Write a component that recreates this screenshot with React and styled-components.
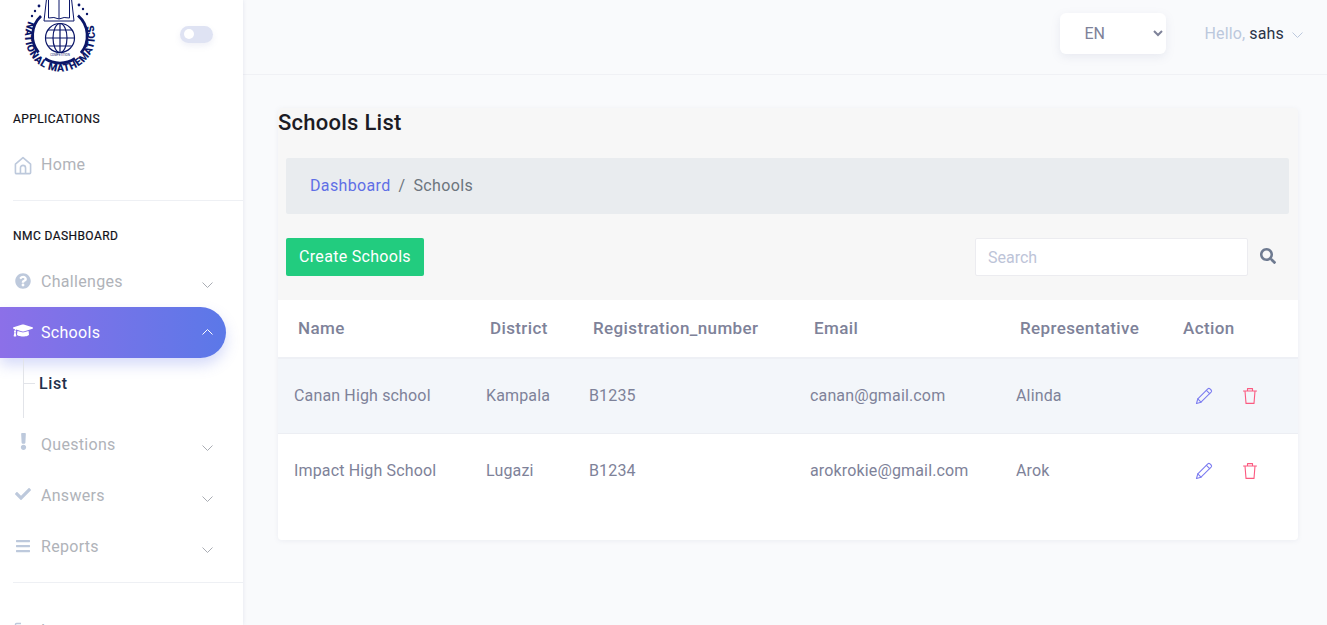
import React from "react";
import styled, { createGlobalStyle } from "styled-components";
import { FaQuestionCircle, FaGraduationCap, FaExclamation, FaCheck, FaBars, FaSearch } from "react-icons/fa";

const Global = createGlobalStyle`
  html, body { margin: 0; height: 100%; overflow: hidden; }
  body { font-family: Roboto, "Liberation Sans", sans-serif; font-size: 16px; letter-spacing: .15px; color: #7e8299; background: #f9fafc; }
  * { box-sizing: border-box; }
`;

const Page = styled.div`display: flex; height: 625px; overflow: hidden;`;
const Sidebar = styled.aside`
  flex: 0 0 243px; height: 625px; overflow: hidden; background: #fff;
  box-shadow: 0 0 4px rgba(120,130,170,.18);
  position: relative; z-index: 2;
`;
const Brand = styled.div`height: 74px; display: flex; align-items: flex-start; padding-left: 21px;`;
const LogoSvg = styled.svg`width: 78px; height: 74px; flex: none;`;
const Toggle = styled.div`
  width: 33px; height: 17px; border-radius: 9px; background: #dfe3f3; margin: 26px 0 0 81px;
  box-shadow: 0 3px 6px rgba(120,130,190,.12); padding: 3px 0 0 4px;
`;
const Knob = styled.div`width: 10px; height: 10px; border-radius: 50%; background: #fff;`;
const Heading = styled.div`
  height: 18px; line-height: 18px; margin: ${p => p.$top}px 0 12px 13px;
  font-size: 12px; font-weight: 400; letter-spacing: .42px; color: #111118; transform: translateY(1px);
  -webkit-text-stroke: .2px #111118;
`;
const Divider = styled.div`height: 1px; background: #eef0f4; margin: 10px 0 0 13px;`;
const Item = styled.div`
  height: 51px; display: flex; align-items: center; padding: 0 30px 0 13px;
  color: #b0b3b9; font-size: 16px; letter-spacing: .3px; position: relative;
`;
const ActiveItem = styled(Item)`
  width: 226px; color: #fff; border-radius: 0 26px 26px 0;
  background: linear-gradient(90deg, #8c70e8 0%, #5b78e8 100%);
  box-shadow: 0 7px 14px rgba(92,110,230,.25); padding-right: 13px;
`;
const LogoutItem = styled(Item)`margin-top: 22px;`;
const IconSlot = styled.span`
  width: 20px; height: 20px; margin-right: 8px; display: flex; align-items: center; justify-content: center;
  color: ${p => p.$light ? "#fff" : "#bdc9dc"}; flex: none; transform: translateY(${p => p.$dy || 0}px);
`;
const Label = styled.span`flex: 1;`;
const Chevron = styled.svg`
  width: 11px; height: 6px; fill: none; stroke: ${p => p.$color || "#a9acb3"}; stroke-width: 1;
  transform: translateY(${p => p.$dy ?? 3}px); flex: none; margin-left: ${p => p.$left || 0}px;
`;
const SubMenu = styled.div`height: 61px; position: relative; padding: 15px 0 0 39px;
  color: #22304a; font-weight: 500; font-size: 16px; letter-spacing: .6px; line-height: 22px;`;
const SubLineV = styled.span`position: absolute; left: 23px; top: 0; bottom: 1px; width: 1px; background: #e2e4e9;`;
const SubLineH = styled.span`position: absolute; left: 23px; top: 25px; width: 12px; height: 1px; background: #e2e4e9;`;

const Main = styled.main`flex: 1; min-width: 0; display: flex; flex-direction: column;`;
const Topbar = styled.header`
  height: 75px; flex: none; border-bottom: 1px solid #f0f1f5; display: flex; align-items: flex-start;
  padding: 13px 24px 0 0; justify-content: flex-end;
`;
const LangSelect = styled.select`
  width: 106px; height: 41px; border: 0; border-radius: 6px; background: #fff; color: #7e8299;
  font: 16px Roboto, sans-serif; padding-left: 21px; box-shadow: 0 3px 10px rgba(120,130,170,.13); outline: none;
`;
const Hello = styled.div`
  margin-left: 39px; height: 41px; display: flex; align-items: center; color: #bcc8dd; font-size: 16px;
  b { font-weight: 400; color: #2a3347; margin-left: 4px; }
`;
const Content = styled.div`padding: 33px 29px 0 35px;`;
const Card = styled.section`
  background: #f7f7f7; border-radius: 4px; box-shadow: 0 1px 5px rgba(130,140,170,.1); overflow: hidden;
`;
const Title = styled.h1`margin: 0; padding-top: 1px; height: 28px; font-size: 22px; line-height: 28px; font-weight: 500; letter-spacing: .25px; color: #1c1c24;`;
const Crumb = styled.nav`
  margin: 22px 9px 0 8px; height: 56px; background: #e9ecef; border-radius: 2px; padding: 0 0 2px 24px;
  display: flex; align-items: center; gap: 8px; color: #6c757d; letter-spacing: .35px;
  a { color: #5f6fe6; }
`;
const Tools = styled.div`display: flex; align-items: center; padding: 24px 22px 24px 8px;`;
const CreateBtn = styled.button`
  width: 138px; height: 38px; border: 0; border-radius: 2px; background: #22cc7f; color: #fff;
  font: 16px Roboto, sans-serif; letter-spacing: .3px; padding: 0 0 2px;
`;
const SearchInput = styled.input`
  width: 273px; height: 38px; margin-left: auto; border: 1px solid #ececf0; border-radius: 2px; padding: 0 12px;
  font: 16px Roboto, sans-serif; background: #fff; outline: none;
  &::placeholder { color: #bdc4d8; }
`;
const SearchIcon = styled.span`margin-left: 12px; width: 16px; display: flex; color: #6e7a90; transform: translateY(-1px);`;
const TableWrap = styled.div`background: #fff; height: 240px;`;
const Table = styled.table`width: 100%; table-layout: fixed; border-collapse: collapse;`;
const Col = styled.col`width: ${p => p.$w ? `${p.$w}px` : "auto"};`;
const Th = styled.th`
  height: 58px; text-align: left; padding: 0 0 2px 20px; font-weight: 500; font-size: 17px; letter-spacing: .38px; color: #7e8299;
  border-bottom: 2px solid #eef0f5;
  white-space: nowrap;
`;
const Td = styled.td`height: 75px; padding: 0 0 0 16px; color: #7e8299; font-size: 16px;`;
const Tr = styled.tr`background: ${p => p.$tint ? "#f3f6fa" : "#fff"}; border-bottom: 1px solid ${p => p.$tint ? "#eceef3" : "transparent"};`;
const Actions = styled.div`display: flex; align-items: center; gap: 28px; padding-left: 16px;`;
const ActionIcon = styled.svg`width: 18px; height: 18px; fill: none; stroke-width: 1.1; stroke-linejoin: round; stroke-linecap: round;`;

const Down = ({ dy, color, left }) => <Chevron viewBox="0 0 11 6" $dy={dy} $color={color} $left={left}><path d="M.5.5l5 5 5-5" /></Chevron>;
const Up = () => <Chevron viewBox="0 0 11 6" $dy={-1} $color="#fff"><path d="M.5 5.5l5-5 5 5" /></Chevron>;

const HomeIcon = () => (
  <svg width="18" height="19" viewBox="0 0 19 20" fill="none" stroke="#bdc9dc" strokeWidth="1.7" strokeLinejoin="round">
    <path d="M1.5 8.6 9.5 1.6l8 7v9a1 1 0 0 1-1 1h-14a1 1 0 0 1-1-1z" />
    <path d="M6.8 18.6v-6a2.7 2.7 0 0 1 5.4 0v6" />
  </svg>
);

const LogoutIcon = () => (
  <svg width="18" height="18" viewBox="0 0 18 18" fill="none" stroke="#bdc9dc" strokeWidth="1.4">
    <path d="M7 1.5H2.5a1 1 0 0 0-1 1v13a1 1 0 0 0 1 1H7M6 9h10M12.5 5.5 16 9l-3.5 3.5" />
  </svg>
);

const Logo = () => (
  <LogoSvg viewBox="0 0 78 74" fill="none" stroke="#0b1668">
    <defs>
      <path id="logo-arc" d="M7.5 21.2 A35 35 0 1 0 70.5 21.2" />
    </defs>
    <g strokeWidth="2.8">
      <path d="M20 16 A27 27 0 0 0 17.5 52.5" />
      <path d="M57 15.5 A27 27 0 0 1 60 53" />
      <path d="M24 58.5 A27 27 0 0 0 54 58.5" />
    </g>
    <g strokeWidth="1">
      <path d="M25.5 -1 L23 21 H53 L50.5 -1" />
      <path d="M27.5 -1 V18 Q33 16.5 38 19 Q43 16.5 48.5 18 V-1 M38 0 V19" />
    </g>
    <g strokeWidth="1.2">
      <circle cx="39" cy="38" r="14.5" />
      <ellipse cx="39" cy="38" rx="7" ry="14.5" />
      <path d="M39 23.5v29M24.5 38h29M27 30h24M27 46h24" />
    </g>
    <text fontSize="10.4" fontWeight="900" fill="#0b1668" stroke="none" fontFamily="Roboto, sans-serif" letterSpacing=".5">
      <textPath href="#logo-arc" startOffset="0">NATIONAL MATHEMATICS</textPath>
    </text>
    <text x="39" y="55.5" textAnchor="middle" fontSize="3" letterSpacing="0" fill="#0b1668" stroke="none" fontFamily="Roboto, sans-serif">COMPETITION</text>
    <g fill="#0b1668" stroke="none">
      <circle cx="18" cy="6" r="1.4" /><circle cx="14" cy="11" r="1.2" /><circle cx="11" cy="16" r="1.2" />
      <circle cx="58" cy="5" r="1.4" /><circle cx="62" cy="9" r="1.2" /><circle cx="66" cy="14" r="1.2" />
    </g>
  </LogoSvg>
);

const PencilIcon = () => (
  <ActionIcon viewBox="0 0 18 18" stroke="#7c7cf0">
    <path d="M1.5 16.5l1.3-4.6L12.8 1.9a1.6 1.6 0 0 1 2.2 0l1.1 1.1a1.6 1.6 0 0 1 0 2.2L6 15.2z" />
    <path d="M2.8 11.9 6 15.2M11.4 3.3l3.3 3.3" />
  </ActionIcon>
);
const TrashIcon = () => (
  <ActionIcon viewBox="0 0 18 18" stroke="#fb5a80">
    <path d="M2.5 4h13M6.5 4V1.6h5V4M4 4l1 12.4h8L14 4" />
  </ActionIcon>
);

const rows = [
  ["Canan High school", "Kampala", "B1235", "canan@gmail.com", "Alinda"],
  ["Impact High School", "Lugazi", "B1234", "arokrokie@gmail.com", "Arok"],
];

export default function App() {
  return (
    <Page>
      <Global />
      <Sidebar>
        <Brand><Logo /><Toggle><Knob /></Toggle></Brand>
        <Heading $top={35}>APPLICATIONS</Heading>
        <Item><IconSlot $dy={1}><HomeIcon /></IconSlot><Label>Home</Label></Item>
        <Divider />
        <Heading $top={25}>NMC DASHBOARD</Heading>
        <Item><IconSlot $dy={-1}><FaQuestionCircle size={16} /></IconSlot><Label>Challenges</Label><Down /></Item>
        <ActiveItem><IconSlot $light $dy={-2}><FaGraduationCap size={21} /></IconSlot><Label>Schools</Label><Up /></ActiveItem>
        <SubMenu><SubLineV /><SubLineH />List</SubMenu>
        <Item><IconSlot $dy={-3}><FaExclamation size={17} /></IconSlot><Label>Questions</Label><Down /></Item>
        <Item><IconSlot $dy={-2}><FaCheck size={16} /></IconSlot><Label>Answers</Label><Down /></Item>
        <Item><IconSlot $dy={-1}><FaBars size={16} /></IconSlot><Label>Reports</Label><Down /></Item>
        <Divider />
        <LogoutItem><IconSlot><LogoutIcon /></IconSlot><Label>Logout</Label></LogoutItem>
      </Sidebar>
      <Main>
        <Topbar>
          <LangSelect defaultValue="EN"><option>EN</option><option>FR</option></LangSelect>
          <Hello>Hello,<b>sahs</b><Down dy={1} color="#bcc8dd" left={8} /></Hello>
        </Topbar>
        <Content>
          <Card>
            <Title>Schools List</Title>
            <Crumb><a>Dashboard</a><span>/</span><span>Schools</span></Crumb>
            <Tools>
              <CreateBtn>Create Schools</CreateBtn>
              <SearchInput placeholder="Search" />
              <SearchIcon><FaSearch size={16} /></SearchIcon>
            </Tools>
            <TableWrap>
              <Table>
                <colgroup>
                  <Col $w={192} /><Col $w={103} /><Col $w={221} />
                  <Col $w={206} /><Col $w={163} /><Col />
                </colgroup>
                <thead>
                  <tr><Th>Name</Th><Th>District</Th><Th>Registration_number</Th><Th>Email</Th><Th>Representative</Th><Th>Action</Th></tr>
                </thead>
                <tbody>
                  {rows.map((r, i) => (
                    <Tr key={r[0]} $tint={i === 0}>
                      {r.map(c => <Td key={c}>{c}</Td>)}
                      <Td><Actions><PencilIcon /><TrashIcon /></Actions></Td>
                    </Tr>
                  ))}
                </tbody>
              </Table>
            </TableWrap>
          </Card>
        </Content>
      </Main>
    </Page>
  );
}
